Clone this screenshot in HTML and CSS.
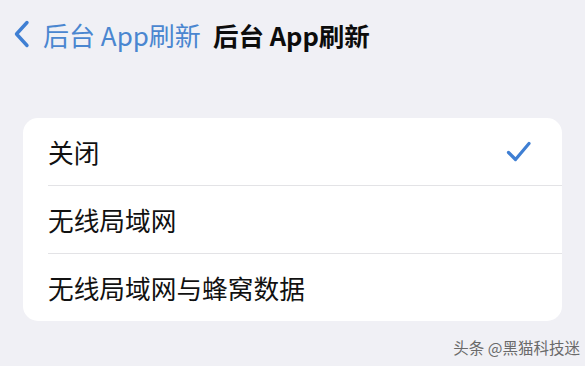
FILE: index.html
```html
<!DOCTYPE html>
<html lang="zh-CN">
<head>
  <meta charset="UTF-8" />
  <title>后台 App刷新</title>
  <link rel="stylesheet" href="styles.css">
</head>
<body>
  <div class="nav-bar">
    <a class="back-link" href="#">
      <svg class="chevron" width="19" height="30" viewBox="0 0 19 30">
        <path d="M15 3.5 L4.5 15 L15 26.5" fill="none" stroke="#3f7fd3" stroke-width="3.4" stroke-linecap="round" stroke-linejoin="round"/>
      </svg>
      <span>后台 App刷新</span>
    </a>
    <h1 class="nav-title">后台 App刷新</h1>
  </div>

  <div class="group">
    <div class="row">
      <span>关闭</span>
      <svg class="check" width="26" height="22" viewBox="0 0 26 22">
        <path d="M2.5 11.5 L9.5 18.5 L23 2.5" fill="none" stroke="#3f7fd3" stroke-width="3.2" stroke-linecap="round" stroke-linejoin="round"/>
      </svg>
    </div>
    <div class="row">
      <span>无线局域网</span>
    </div>
    <div class="row">
      <span>无线局域网与蜂窝数据</span>
    </div>
  </div>

  <div class="watermark">头条 @黑猫科技迷</div>
</body>
</html>
```

FILE: styles.css
```css
body {
  margin: 0;
  width: 585px;
  height: 366px;
  overflow: hidden;
  background: #f0f0f5;
  font-family: "Noto Sans CJK SC", "Noto Sans", sans-serif;
  color: #111;
  position: relative;
}

.nav-bar {
  display: flex;
  align-items: center;
  height: 68px;
  padding-left: 12px;
}

.back-link {
  display: flex;
  align-items: center;
  gap: 12px;
  color: #4a86d0;
  text-decoration: none;
  font-size: 26px;
}

.nav-title {
  margin: 0 0 0 12px;
  font-size: 25.5px;
  font-weight: 700;
  color: #0c0c0c;
}

.group {
  margin: 50px 23px 0 23px;
  background: #fff;
  border-radius: 15px;
  overflow: hidden;
}

.row {
  display: flex;
  align-items: center;
  justify-content: space-between;
  height: 67px;
  margin-left: 25px;
  padding-right: 30px;
  font-size: 25.7px;
  border-bottom: 1px solid #e3e3e6;
}

.row:last-child {
  border-bottom: none;
}

.check {
  display: block;
}

.watermark {
  position: absolute;
  right: 5px;
  bottom: 8px;
  font-size: 15.5px;
  color: #6a6a6a;
}
```
